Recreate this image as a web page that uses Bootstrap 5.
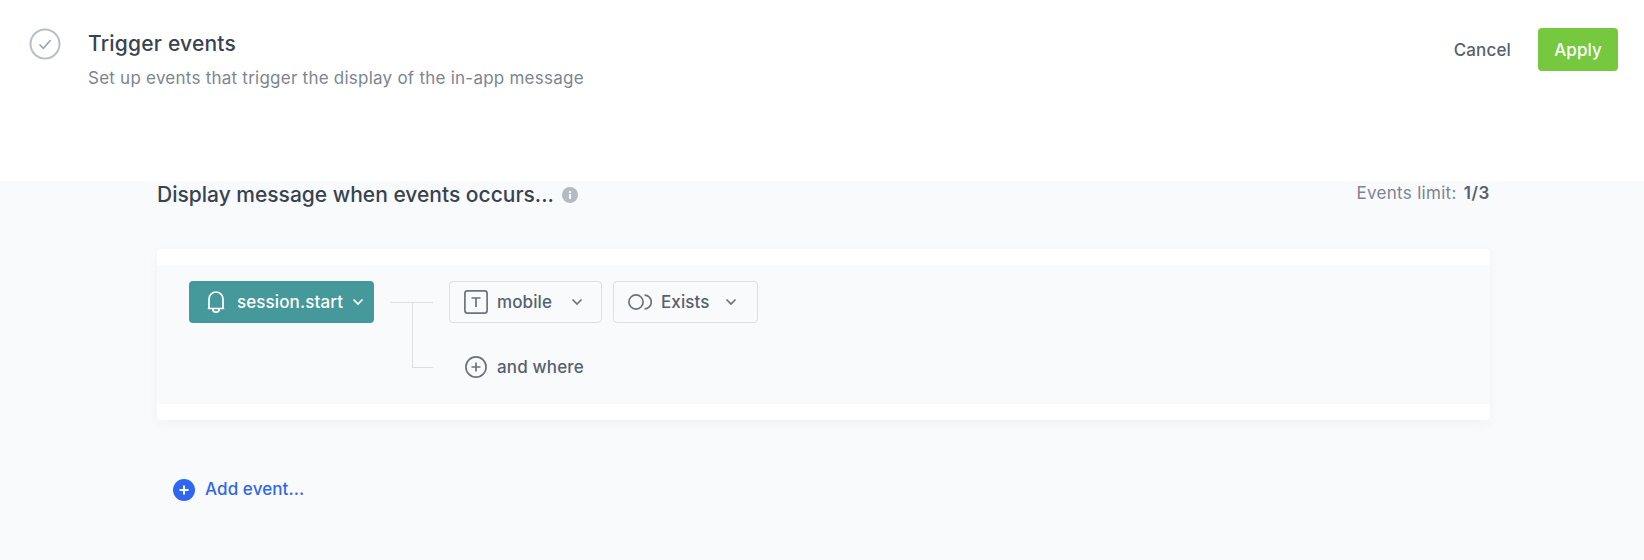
<!DOCTYPE html>
<html lang="en">
<head>
  <meta charset="UTF-8">
  <title>Trigger events</title>
  <link href="https://cdn.jsdelivr.net/npm/bootstrap@5.3.0/dist/css/bootstrap.min.css" rel="stylesheet">
  <style>
    body { font-family: Inter, "Liberation Sans", sans-serif; background: #f9fafc; color: #384350; overflow: hidden; }
    .top-bar { height: 181px; padding: 29px 26px 0 29px; }
    .top-actions { margin-top: -1px; }
    .step-icon { width: 32px; height: 32px; margin-right: 27px; margin-top: -1px; flex: none; }
    .step-title { font-size: 21px; line-height: 30px; font-weight: 500; margin: 0; letter-spacing: .2px; }
    .step-sub { font-size: 17px; line-height: 24px; color: #7d8590; margin-top: 7px; letter-spacing: .24px; }
    .btn-cancel { font-size: 17px; font-weight: 500; color: #57616d; padding: 2px 0 0; margin-right: 27px; border: 0; letter-spacing: .15px; }
    .btn-apply { width: 80px; height: 43px; padding: 2px 0 0; background: #76c83f; border: 0; color: #fff; font-size: 17px; font-weight: 500; border-radius: 4px; letter-spacing: .1px; }
    .content-wrap { width: 1333px; margin-left: 157px; }
    .section-head { height: 68px; }
    .section-title { font-size: 21px; line-height: 28px; font-weight: 500; margin: 0; }
    .limit-text { font-size: 17px; line-height: 24px; color: #7d8590; margin-top: 0; letter-spacing: .3px; }
    .limit-text b { font-weight: 600; color: #57616d; margin-left: 2px; letter-spacing: .6px; }
    .event-card { background: #fff; border-radius: 4px; padding: 16px 0; box-shadow: 0 4px 12px rgba(35, 41, 54, .04); }
    .event-band { background: #f9fafc; height: 139px; padding: 16px 32px; }
    .session-btn { width: 185px; height: 42px; background: #45999b; color: #fff; border-radius: 4px; font-size: 17px; font-weight: 500; padding: 0 10px 0 18px; letter-spacing: .1px; }
    .session-label { margin: 2px 0 0 12px; }
    .lines-box { width: 75px; height: 107px; position: relative; flex: none; }
    .lines-box i { position: absolute; background: #dbdfe3; }
    .line-a { left: 16px; top: 21px; width: 43px; height: 1px; }
    .line-b { left: 38px; top: 21px; width: 1px; height: 65px; }
    .line-c { left: 38px; top: 86px; width: 21px; height: 1px; }
    .filters { gap: 11px; }
    .filter-btn { height: 42px; background: #f9fafc; border: 1px solid #dbdfe3; border-radius: 4px; font-size: 17px; font-weight: 500; color: #57616d; letter-spacing: .1px; }
    .filter-mobile { width: 153px; padding: 0 18px 0 14px; }
    .filter-exists { width: 145px; padding: 0 20px 0 14px; }
    .filter-label { margin: 2px 0 0 9px; }
    .and-where { font-size: 17px; font-weight: 500; color: #57616d; height: 42px; margin-top: 23px; padding-left: 16px; letter-spacing: .15px; }
    .and-label { margin: 2px 0 0 10px; }
    .add-event { font-size: 17px; font-weight: 500; color: #2f66f2; margin-top: 57px; padding-left: 16px; letter-spacing: .1px; }
    .add-label { margin-left: 10px; }
  </style>
</head>
<body>
  <!-- header -->
  <div class="top-bar bg-white d-flex align-items-start">
    <svg class="step-icon" viewBox="0 0 32 32" fill="none" stroke="#b9bfc6" stroke-width="1.5">
      <circle cx="16" cy="16" r="14.5" stroke-width="2"/>
      <path d="M10.5 16.5l3.8 3.8 7.4-8.3" stroke="#9aa2ab"/>
    </svg>
    <div class="flex-grow-1">
      <h1 class="step-title">Trigger events</h1>
      <div class="step-sub">Set up events that trigger the display of the in-app message</div>
    </div>
    <div class="top-actions d-flex align-items-center">
      <button class="btn btn-cancel">Cancel</button>
      <button class="btn btn-apply">Apply</button>
    </div>
  </div>

  <div class="content-wrap">
    <div class="section-head d-flex justify-content-between align-items-start">
      <div class="d-flex align-items-center">
        <h2 class="section-title">Display message when events occurs...</h2>
        <svg class="ms-2" width="16" height="16" viewBox="0 0 16 16">
          <circle cx="8" cy="8" r="8" fill="#b5bac2"/>
          <rect x="7" y="7" width="2" height="5" fill="#f9fafc"/>
          <rect x="7" y="4" width="2" height="2" fill="#f9fafc"/>
        </svg>
      </div>
      <div class="limit-text">Events limit: <b>1/3</b></div>
    </div>

    <div class="event-card">
      <div class="event-band d-flex align-items-start">
        <div class="session-btn d-flex align-items-center">
          <svg width="18" height="23" viewBox="0 0 18 23" fill="none" stroke="#fff" stroke-width="1.7">
            <path d="M2 17.500V8a7 7 0 0 1 14 0v9.500zM.8 17.500h16.400M5.800 18a3.200 3.200 0 0 0 6.400 0"/>
          </svg>
          <span class="session-label flex-grow-1">session.start</span>
          <svg width="12" height="8" viewBox="0 0 12 8" fill="none" stroke="#fff" stroke-width="1.7"><path d="M1.500 1.500l4.500 4.500 4.500-4.500"/></svg>
        </div>
        <div class="lines-box">
          <i class="line-a"></i><i class="line-b"></i><i class="line-c"></i>
        </div>
        <div>
          <div class="filters d-flex">
            <div class="filter-btn filter-mobile d-flex align-items-center">
              <svg width="24" height="24" viewBox="0 0 24 24" fill="none" stroke="#6a737f" stroke-width="1.7">
                <rect x=".9" y=".9" width="22.200" height="22.200" rx="2.500"/>
                <path d="M7.500 8h9M12 8v9"/>
              </svg>
              <span class="filter-label flex-grow-1">mobile</span>
              <svg width="12" height="8" viewBox="0 0 12 8" fill="none" stroke="#6a737f" stroke-width="1.700"><path d="M1.500 1.500l4.500 4.500 4.500-4.500"/></svg>
            </div>
            <div class="filter-btn filter-exists d-flex align-items-center">
              <svg width="24" height="16" viewBox="0 0 24 16" fill="none" stroke="#6a737f" stroke-width="1.700">
                <circle cx="8" cy="8" r="7.100"/>
                <path d="M16.500 1.200a6.800 6.800 0 0 1 0 13.600"/>
              </svg>
              <span class="filter-label flex-grow-1">Exists</span>
              <svg width="12" height="8" viewBox="0 0 12 8" fill="none" stroke="#6a737f" stroke-width="1.700"><path d="M1.500 1.500l4.500 4.500 4.500-4.500"/></svg>
            </div>
          </div>
          <div class="and-where d-flex align-items-center">
            <svg width="22" height="22" viewBox="0 0 22 22" fill="none" stroke="#6a737f" stroke-width="1.700">
              <circle cx="11" cy="11" r="10.100"/>
              <path d="M11 6.500v9M6.500 11h9"/>
            </svg>
            <span class="and-label">and where</span>
          </div>
        </div>
      </div>
    </div>

    <div class="add-event d-flex align-items-center">
      <svg width="22" height="22" viewBox="0 0 22 22">
        <circle cx="11" cy="11" r="11" fill="#2f66f2"/>
        <path d="M11 6.500v9M6.500 11h9" stroke="#fff" stroke-width="2"/>
      </svg>
      <span class="add-label">Add event...</span>
    </div>
  </div>
  <script src="https://cdn.jsdelivr.net/npm/bootstrap@5.3.0/dist/js/bootstrap.bundle.min.js"></script>
</body>
</html>
